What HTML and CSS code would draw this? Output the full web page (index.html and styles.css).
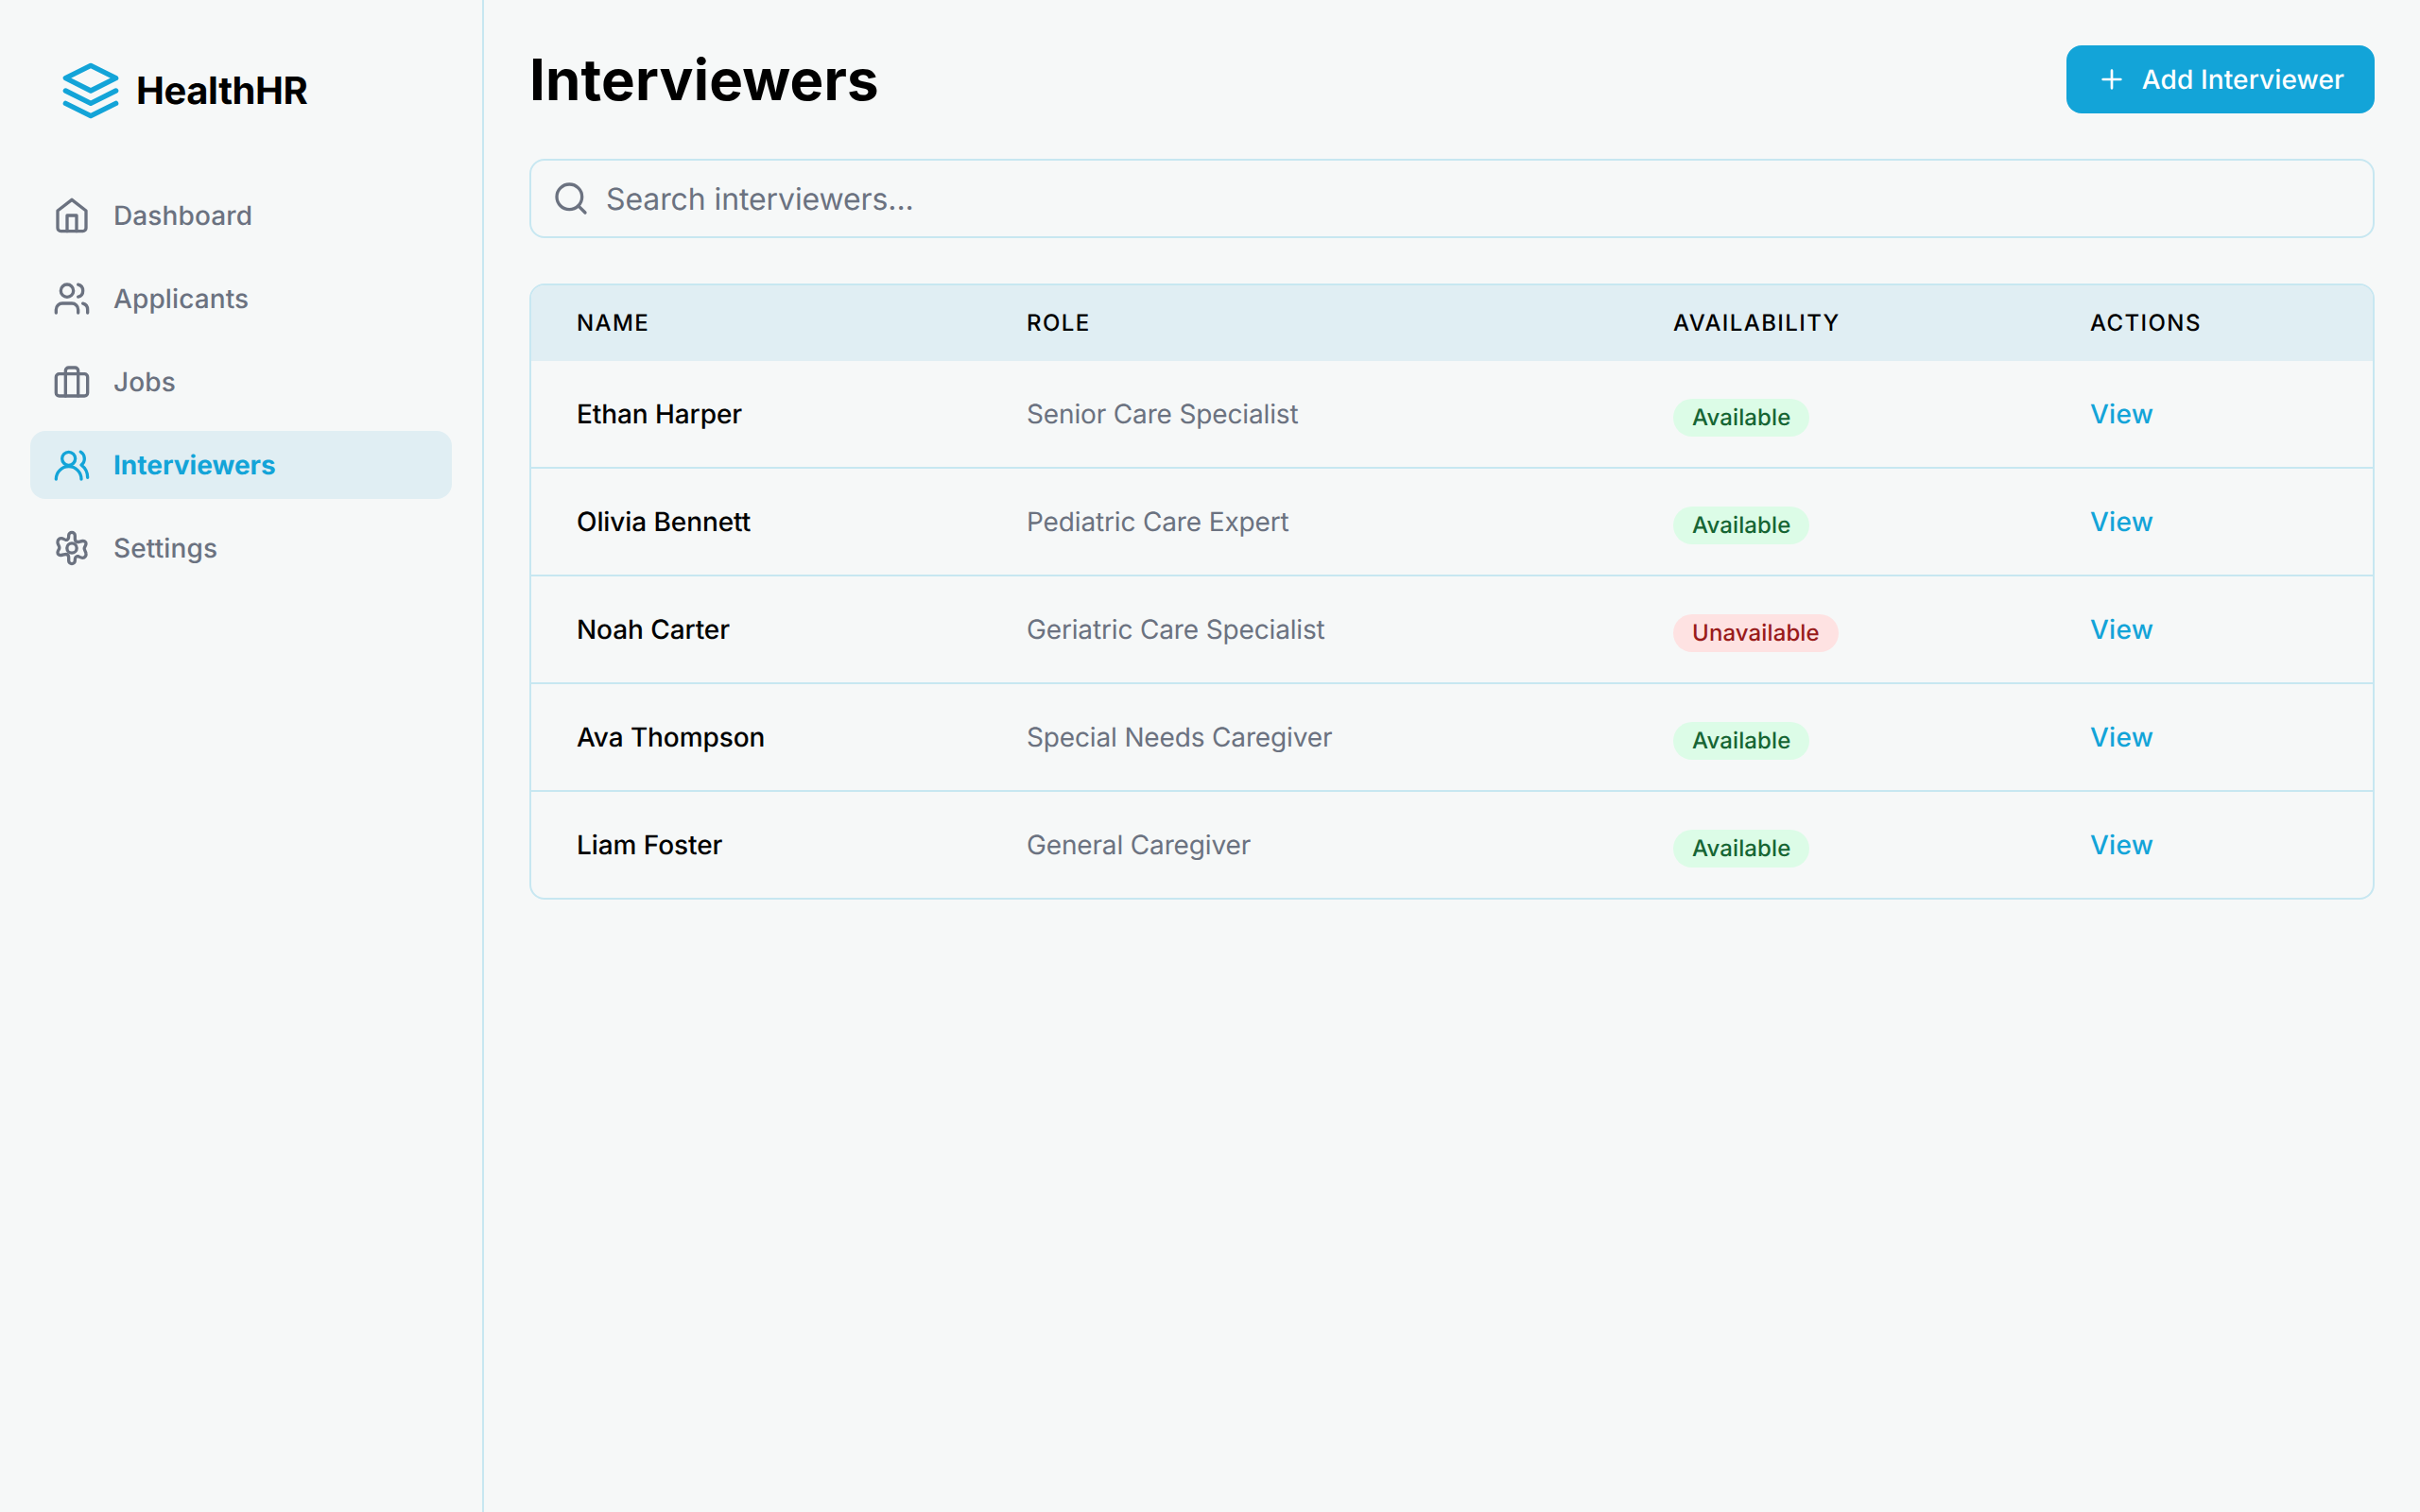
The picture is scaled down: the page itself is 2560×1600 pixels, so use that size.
FILE: index.html
```html
<!DOCTYPE html>
<html lang="en">
<head>
<meta charset="utf-8">
<title>HealthHR – Interviewers</title>
<link rel="stylesheet" href="styles.css">
</head>
<body>
<div class="app">
  <aside class="sidebar">
    <div class="brand">
      <svg class="brand-logo" viewBox="0 0 24 24"><path d="M12 2 2 7l10 5 10-5-10-5Z"/><path d="m2 17 10 5 10-5"/><path d="m2 12 10 5 10-5"/></svg>
      <span class="brand-name">HealthHR</span>
    </div>
    <nav class="nav">
      <a class="nav-item"><svg class="icon" viewBox="0 0 24 24"><path d="m3 9 9-7 9 7v11a2 2 0 0 1-2 2H5a2 2 0 0 1-2-2z"/><path d="M9 22V12h6v10"/></svg><span>Dashboard</span></a>
      <a class="nav-item"><svg class="icon" viewBox="0 0 24 24"><path d="M16 21v-2a4 4 0 0 0-4-4H6a4 4 0 0 0-4 4v2"/><circle cx="9" cy="7" r="4"/><path d="M22 21v-2a4 4 0 0 0-3-3.87"/><path d="M16 3.13a4 4 0 0 1 0 7.75"/></svg><span>Applicants</span></a>
      <a class="nav-item"><svg class="icon" viewBox="0 0 24 24"><rect x="2" y="7" width="20" height="14" rx="2"/><path d="M16 21V5a2 2 0 0 0-2-2h-4a2 2 0 0 0-2 2v16"/></svg><span>Jobs</span></a>
      <a class="nav-item active"><svg class="icon" viewBox="0 0 24 24"><path d="M18 21a8 8 0 0 0-16 0"/><circle cx="10" cy="8" r="4.2"/><path d="M22 20c0-3.37-2-6.5-4-8a5 5 0 0 0-.45-8.3"/></svg><span>Interviewers</span></a>
      <a class="nav-item"><svg class="icon" viewBox="0 0 24 24"><path d="M12 2a2 2 0 0 0-2 2v.6C10 6 9.3 7 8.2 6.8C7.2 6.6 6.6 5.8 5.2 5.8C3.6 5.8 2.8 7.4 3 8.6C3.2 10 4.1 10.6 4.1 11.8C4.1 12.8 3 13.6 3 14.8C3 16 4 16.6 5.2 16.5C6.6 16.4 7.4 15.8 8.6 15.9C9.6 16.1 10 17 10 18V20a2 2 0 0 0 4 0v-.6C14 18 14.7 17 15.8 17.2C16.8 17.4 17.4 18.2 18.8 18.2C20.4 18.2 21.2 16.6 21 15.4C20.8 14 19.9 13.4 19.9 12.2C19.9 11.2 21 10.4 21 9.2C21 8 20 7.4 18.8 7.5C17.4 7.6 16.6 8.2 15.4 8.1C14.4 7.9 14 7 14 6V4a2 2 0 0 0-2-2z"/><circle cx="12" cy="12" r="3.1"/></svg><span>Settings</span></a>
    </nav>
  </aside>
  <main class="main">
    <header class="page-head">
      <h1 class="title">Interviewers</h1>
      <button class="add-btn"><svg class="plus" viewBox="0 0 24 24"><path d="M5 12h14M12 5v14"/></svg><span>Add Interviewer</span></button>
    </header>
    <label class="search">
      <svg class="icon" viewBox="0 0 24 24"><circle cx="11" cy="11" r="8"/><path d="m21 21-4.3-4.3"/></svg>
      <input class="search-input" type="text" placeholder="Search interviewers...">
    </label>
    <div class="table-card">
      <table class="table">
        <colgroup><col class="col-name"><col class="col-role"><col class="col-avail"><col class="col-actions"></colgroup>
        <thead><tr><th>NAME</th><th>ROLE</th><th>AVAILABILITY</th><th>ACTIONS</th></tr></thead>
        <tbody>
          <tr><td class="name">Ethan Harper</td><td>Senior Care Specialist</td><td><span class="badge ok">Available</span></td><td><a class="view">View</a></td></tr>
          <tr><td class="name">Olivia Bennett</td><td>Pediatric Care Expert</td><td><span class="badge ok">Available</span></td><td><a class="view">View</a></td></tr>
          <tr><td class="name">Noah Carter</td><td>Geriatric Care Specialist</td><td><span class="badge off">Unavailable</span></td><td><a class="view">View</a></td></tr>
          <tr><td class="name">Ava Thompson</td><td>Special Needs Caregiver</td><td><span class="badge ok">Available</span></td><td><a class="view">View</a></td></tr>
          <tr><td class="name">Liam Foster</td><td>General Caregiver</td><td><span class="badge ok">Available</span></td><td><a class="view">View</a></td></tr>
        </tbody>
      </table>
    </div>
  </main>
</div>
</body>
</html>
```
FILE: styles.css
```css
*, *::before, *::after { box-sizing: border-box; }
body {
  margin: 0;
  background: #f6f8f8;
  color: #000;
  font-family: Inter, "Liberation Sans", sans-serif;
  font-size: 28px;
  line-height: 40px;
  text-rendering: geometricPrecision;
}
svg {
  flex: none;
  fill: none;
  stroke: currentColor;
  stroke-width: 2;
  stroke-linecap: round;
  stroke-linejoin: round;
}
.app { display: flex; min-height: 1600px; }
.sidebar {
  flex: none;
  width: 512px;
  padding: 32px;
  border-right: 2px solid #c7e7f1;
}
.brand {
  display: flex;
  align-items: center;
  gap: 16px;
  padding: 32px;
  margin-bottom: 32px;
  height: 128px;
}
.brand-logo { width: 64px; height: 64px; color: #13a4d8; }
.brand-name { font-size: 40px; line-height: 56px; font-weight: 700; letter-spacing: -0.4px; }
.nav { display: flex; flex-direction: column; gap: 16px; }
.nav-item {
  display: flex;
  align-items: center;
  gap: 24px;
  height: 72px;
  padding: 0 24px;
  border-radius: 16px;
  color: #6b7280;
  font-weight: 500;
  letter-spacing: 0.12px;
}
.nav-item.active { background: #e0eef3; color: #13a4d8; font-weight: 700; letter-spacing: 0; }
.icon { width: 40px; height: 40px; }
.main { flex: 1; min-width: 0; padding: 48px; }
.page-head {
  display: flex;
  align-items: center;
  justify-content: space-between;
  margin-bottom: 48px;
}
.title {
  margin: 0;
  font-size: 60px;
  line-height: 72px;
  font-weight: 700;
  letter-spacing: 0.17px;
  text-rendering: auto;
}
.add-btn {
  display: flex;
  align-items: center;
  gap: 16px;
  height: 72px;
  padding: 0 32px;
  border: 0;
  border-radius: 16px;
  background: #13a4d8;
  color: #fff;
  font: 500 28px/40px Inter, sans-serif;
  letter-spacing: 0.13px;
  text-rendering: inherit;
}
.plus { width: 32px; height: 32px; }
.search {
  display: flex;
  align-items: center;
  gap: 17px;
  height: 84px;
  padding: 0 22px;
  margin-bottom: 48px;
  border: 2px solid #c7e7f1;
  border-radius: 16px;
  color: #6b7280;
}
.search-input {
  flex: 1;
  padding: 2px 0 0;
  border: 0;
  outline: 0;
  background: transparent;
  font: 400 32px/48px Inter, sans-serif;
  letter-spacing: -0.1px;
  text-rendering: inherit;
}
.search-input::placeholder { color: #6b7280; opacity: 1; }
.table-card {
  overflow: hidden;
  border: 2px solid #c7e7f1;
  border-radius: 16px;
}
.table { width: 100%; border-collapse: separate; border-spacing: 0; table-layout: fixed; }
.col-name { width: 476px; }
.col-role { width: 684px; }
.col-avail { width: 441px; }
th, td { padding: 0 48px; text-align: left; }
th {
  height: 80px;
  background: #e0eef3;
  font-size: 24px;
  line-height: 32px;
  font-weight: 500;
  letter-spacing: 1.4px;
}
td {
  height: 114px;
  border-bottom: 2px solid #c7e7f1;
  color: #6b7280;
  letter-spacing: -0.15px;
}
tr:last-child td { height: 112px; border-bottom: 0; }
.name { color: #000; font-weight: 500; letter-spacing: -0.08px; }
.view { color: #13a4d8; font-weight: 500; letter-spacing: 0.25px; }
.badge {
  display: block;
  width: fit-content;
  margin-top: 8px;
  padding: 4px 20px;
  border-radius: 20px;
  font-size: 24px;
  line-height: 32px;
  font-weight: 500;
  letter-spacing: 0.12px;
}
.ok { background: #dcfce7; color: #166534; }
.off { background: #fee2e2; color: #991b1b; }
```
